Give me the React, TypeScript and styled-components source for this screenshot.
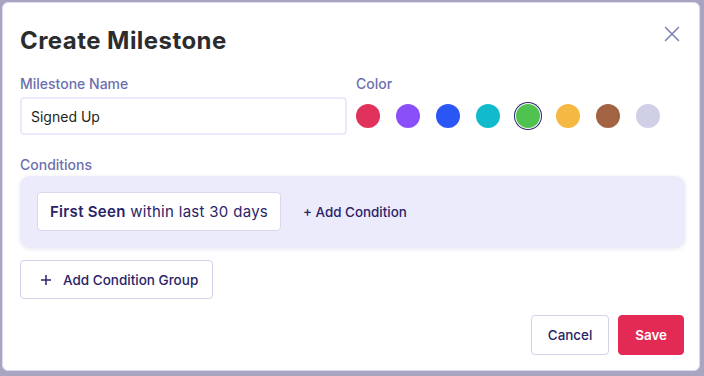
import React from 'react';
import styled, { createGlobalStyle } from 'styled-components';

const GlobalStyle = createGlobalStyle`
  html, body {
    margin: 0;
    padding: 0;
    height: 100%;
  }
  body {
    font-family: Inter, "Noto Sans", sans-serif;
    background: #a8a5c0;
  }
`

const Backdrop = styled.div`
  width: 704px;
  height: 376px;
  box-sizing: border-box;
  padding: 2px 4px 5px 2px;
  background: #a8a5c0;
`

const Modal = styled.div`
  box-sizing: border-box;
  height: 100%;
  background: #fff;
  border: 1px solid #dcdaf0;
  border-radius: 6px;
  padding: 19px 14px 15px 17px;
  display: flex;
  flex-direction: column;
`

const Header = styled.div`
  display: flex;
  justify-content: space-between;
  align-items: flex-start;
`

const Title = styled.h2`
  margin: 0;
  font-size: 24px;
  line-height: 38px;
  font-weight: 700;
  color: #2c2c2e;
  letter-spacing: 0.45px;
`

const CloseButton = styled.button`
  border: none;
  background: none;
  padding: 0;
  margin: 4px 5px 0 0;
  width: 16px;
  height: 16px;
  color: #7b7eb2;
  cursor: pointer;
  display: flex;
`

const FieldsRow = styled.div`
  display: grid;
  grid-template-columns: 327px 1fr;
  column-gap: 9px;
  margin-top: 15px;
`

const Field = styled.div`
  display: flex;
  flex-direction: column;
`

const Label = styled.label`
  font-size: 14px;
  line-height: 18px;
  font-weight: 500;
  color: #6c70ae;
  margin-bottom: 4px;
`

const TextInput = styled.input`
  box-sizing: border-box;
  height: 38px;
  width: 100%;
  border: 2px solid #ebe9fb;
  border-radius: 4px;
  padding: 0 9px;
  font-family: inherit;
  font-size: 14px;
  color: #1f1f22;
  outline: none;
`

const Swatches = styled.div`
  display: flex;
  align-items: center;
  gap: 16px;
  height: 38px;
`

const Swatch = styled.button<{ $color: string; $selected?: boolean }>`
  width: 24px;
  height: 24px;
  padding: 0;
  border-radius: 50%;
  border: none;
  background: ${p => p.$color};
  box-shadow: ${p => (p.$selected ? '0 0 0 1px #fff, 0 0 0 2px #2a2468' : 'none')};
  cursor: pointer;
`

const SectionLabel = styled(Label)`
  margin-top: 21px;
  margin-bottom: 0;
`

const ConditionsBox = styled.div`
  margin-top: 2px;
  background: #ecebfc;
  border-radius: 10px;
  box-shadow: 0 1px 4px rgba(60, 55, 120, 0.12);
  padding: 16px 17px 17px;
  display: flex;
  align-items: center;
  gap: 22px;
`

const ConditionChip = styled.div`
  box-sizing: border-box;
  height: 39px;
  display: flex;
  align-items: center;
  padding: 0 12px;
  background: #fff;
  border: 1px solid #d8d7ee;
  border-radius: 4px;
  font-size: 15px;
  letter-spacing: 0.3px;
  color: #2a2468;
  white-space: pre;

  strong {
    font-weight: 600;
  }
`

const LinkButton = styled.button`
  border: none;
  background: none;
  padding: 0;
  font-family: inherit;
  font-size: 13.4px;
  font-weight: 500;
  color: #2a2468;
  cursor: pointer;
`

const OutlineButton = styled.button`
  box-sizing: border-box;
  height: 39px;
  display: inline-flex;
  align-items: center;
  gap: 12px;
  padding: 0 14px 0 20px;
  border: 1px solid #d3d2ea;
  border-radius: 4px;
  background: #fff;
  font-family: inherit;
  font-size: 13.5px;
  font-weight: 500;
  color: #2a2468;
  cursor: pointer;
`

const AddGroupRow = styled.div`
  margin-top: 12px;
`

const Footer = styled.div`
  margin-top: auto;
  display: flex;
  justify-content: flex-end;
  gap: 9px;
  padding-right: 1px;
`

const FooterButton = styled.button<{ $primary?: boolean }>`
  box-sizing: border-box;
  height: 40px;
  padding: 0 16px;
  border-radius: 4px;
  border: 1px solid ${p => (p.$primary ? '#e32a55' : '#d3d2ea')};
  background: ${p => (p.$primary ? '#e32a55' : '#fff')};
  color: ${p => (p.$primary ? '#fff' : '#2a2468')};
  font-family: inherit;
  font-size: 13.4px;
  font-weight: ${p => (p.$primary ? 600 : 500)};
  cursor: pointer;
`

const colors = [
  '#e0325a',
  '#8a4ff8',
  '#2b56f6',
  '#12bbcc',
  '#4fc24f',
  '#f5b842',
  '#a16341',
  '#cfd0e6',
]

const XIcon = () => (
  <svg width="16" height="16" viewBox="0 0 16 16" fill="none" stroke="currentColor" strokeWidth="1.5" strokeLinecap="round">
    <path d="M1.5 1.5l13 13M14.5 1.5l-13 13" />
  </svg>
)

const PlusIcon = () => (
  <svg width="10" height="10" viewBox="0 0 10 10" fill="none" stroke="currentColor" strokeWidth="1.5">
    <path d="M5 0v10M0 5h10" />
  </svg>
)

const App: React.FC = () => {
  return (
    <>
      <GlobalStyle />
      <Backdrop>
        <Modal>
          <Header>
            <Title>Create Milestone</Title>
            <CloseButton aria-label="Close"><XIcon /></CloseButton>
          </Header>

          <FieldsRow>
            <Field>
              <Label>Milestone Name</Label>
              <TextInput defaultValue="Signed Up" />
            </Field>
            <Field>
              <Label>Color</Label>
              <Swatches>
                {colors.map((c, i) => (
                  <Swatch key={c} $color={c} $selected={i === 4} />
                ))}
              </Swatches>
            </Field>
          </FieldsRow>

          <SectionLabel>Conditions</SectionLabel>
          <ConditionsBox>
            <ConditionChip>
              <strong>First Seen</strong> within last 30 days
            </ConditionChip>
            <LinkButton>+ Add Condition</LinkButton>
          </ConditionsBox>

          <AddGroupRow>
            <OutlineButton><PlusIcon />Add Condition Group</OutlineButton>
          </AddGroupRow>

          <Footer>
            <FooterButton>Cancel</FooterButton>
            <FooterButton $primary>Save</FooterButton>
          </Footer>
        </Modal>
      </Backdrop>
    </>
  )
}

export default App
